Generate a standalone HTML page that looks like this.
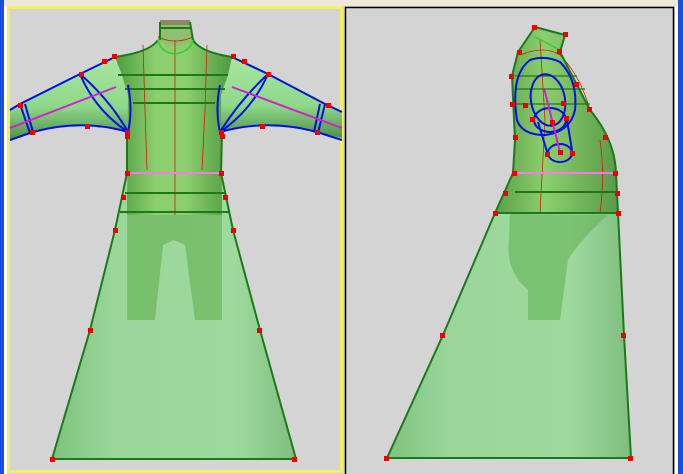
<!DOCTYPE html>
<html><head><style>
html,body{margin:0;padding:0;width:683px;height:474px;overflow:hidden;background:#d4d4d4}
svg{display:block}
</style></head><body>
<svg width="683" height="474" viewBox="0 0 683 474" xmlns="http://www.w3.org/2000/svg">
<defs>
<linearGradient id="dress" x1="0" x2="1" y1="0" y2="0">
<stop offset="0" stop-color="#6fbf6f"/><stop offset="0.25" stop-color="#8fd68f"/><stop offset="0.75" stop-color="#95da95"/><stop offset="1" stop-color="#6fba6f"/></linearGradient>
<linearGradient id="torso" x1="0" x2="1"><stop offset="0" stop-color="#4f9a40"/><stop offset="0.35" stop-color="#8ccf6e"/><stop offset="0.6" stop-color="#8ccf6e"/><stop offset="1" stop-color="#4f9a40"/></linearGradient>
<linearGradient id="arm" x1="0" x2="0" y1="0" y2="1"><stop offset="0" stop-color="#a8e6a0"/><stop offset="0.6" stop-color="#8fd88a"/><stop offset="1" stop-color="#4e8f48"/></linearGradient>
<linearGradient id="side" x1="0" x2="1"><stop offset="0" stop-color="#5a9e48"/><stop offset="0.4" stop-color="#8ccf6e"/><stop offset="1" stop-color="#5a9a48"/></linearGradient>
</defs>
<!-- frame -->
<rect x="0" y="0" width="683" height="6" fill="#ece9d8"/>
<rect x="0" y="0" width="4" height="474" fill="#1a4fd8"/>
<rect x="4" y="6" width="3" height="468" fill="#fff"/>
<rect x="678" y="0" width="5" height="474" fill="#1a4fd8"/>
<rect x="675" y="6" width="3" height="468" fill="#fff"/>
<rect x="8.5" y="7.5" width="333" height="464" fill="none" stroke="#f6f060" stroke-width="3"/>
<rect x="345.5" y="7.5" width="328" height="470" fill="none" stroke="#000" stroke-width="1.5"/>

<!-- LEFT FIGURE -->
<!-- arms -->
<path d="M115,57 L20,104 L10,110 L10,140 L30,133 Q80,118 128,132 L128,80 Z" fill="url(#arm)"/>
<path d="M232,57 L325,104 L342,112 L342,138 L320,133 Q270,118 220,132 L220,80 Z" fill="url(#arm)"/>
<!-- legs -->
<path d="M127,190 L222,190 L222,320 L195,320 L185,245 L174,240 L163,245 L155,320 L127,320 Z" fill="#6fb560"/>
<!-- dress -->
<path d="M127,173 L221,173 L233,230 L260,330 L296,459 L52,459 L90,330 L115,230 Z" fill="url(#dress)" fill-opacity="0.85"/>
<path d="M127,190 L222,190 L222,320 L195,320 L185,245 L174,240 L163,245 L155,320 L127,320 Z" fill="#6cb25c" fill-opacity="0.6"/>
<!-- torso -->
<path d="M158,40 Q150,52 115,57 L122,75 L128,95 L127,215 L222,215 L221,95 L228,75 L232,57 Q200,52 193,40 Z" fill="url(#torso)"/>
<path d="M160,22 L190,22 L193,40 Q175,52 158,40 Z" fill="#8fbf70"/>
<rect x="160" y="20" width="30" height="5" fill="#8a8a60"/>
<!-- red seams -->
<g stroke="#cc2200" stroke-width="0.8" fill="none">
<path d="M143,45 L145,110 L147,170"/><path d="M207,45 L205,110 L202,170"/>
<path d="M175,40 L175,215"/><path d="M158,37 Q175,45 193,37"/>
</g>
<!-- green lines -->
<g stroke="#1a7a1a" stroke-width="2" fill="none">
<path d="M158,40 Q150,52 115,57"/><path d="M193,40 Q200,52 232,57"/>
<path d="M160,22 L160,40 M190,22 L193,40 M160,28 L190,28"/>
<path d="M118,75 L228,75 M125,89 L225,89 M133,103 L215,103"/>
<path d="M125,193 L225,193 M120,212 L229,212"/>
<path d="M127,132 L127,173 M222,132 L221,173"/>
<path d="M127,173 L115,230 L90,330 L52,459 L296,459 L260,330 L233,230 L221,173"/>
</g>
<path d="M158,40 Q160,52 175,54 Q190,52 193,40" stroke="#2fcf2f" stroke-width="1.5" fill="none"/>
<!-- blue arm outlines -->
<g stroke="#0010e0" stroke-width="2" fill="none">
<path d="M115,57 L80,74 L20,104 L10,110"/><path d="M128,132 Q80,118 30,133 L10,140"/>
<path d="M80,74 Q95,110 128,132 M80,74 Q110,100 128,132"/>
<path d="M20,104 L30,133 M25,104 L33,132"/>
<path d="M232,57 L268,74 L325,104 L342,112"/><path d="M220,132 Q270,118 320,133 L342,140"/>
<path d="M268,74 Q252,110 220,132 M268,74 Q240,100 220,132"/>
<path d="M325,104 L318,133 M320,104 L314,132"/>
<path d="M128,85 Q133,110 128,132 M220,85 Q215,110 220,132"/>
</g>
<g stroke="#d020d0" stroke-width="2"><path d="M10,128 L116,87"/><path d="M232,87 L342,128"/></g>
<path d="M127,173 L221,173" stroke="#f080e0" stroke-width="2"/>
<!-- red markers left -->
<g fill="#ee0000">
<rect x="112" y="54" width="5" height="5"/><rect x="102" y="59" width="5" height="5"/><rect x="79" y="72" width="5" height="5"/>
<rect x="18" y="103" width="5" height="5"/><rect x="30" y="130" width="5" height="5"/><rect x="85" y="124" width="5" height="5"/>
<rect x="125" y="130" width="5" height="5"/><rect x="125" y="134" width="5" height="5"/>
<rect x="231" y="54" width="5" height="5"/><rect x="242" y="59" width="5" height="5"/><rect x="266" y="72" width="5" height="5"/>
<rect x="326" y="103" width="5" height="5"/><rect x="315" y="130" width="5" height="5"/><rect x="260" y="124" width="5" height="5"/>
<rect x="219" y="130" width="5" height="5"/><rect x="220" y="134" width="5" height="5"/>
<rect x="125" y="171" width="5" height="5"/><rect x="219" y="171" width="5" height="5"/>
<rect x="121" y="195" width="5" height="5"/><rect x="223" y="195" width="5" height="5"/>
<rect x="113" y="228" width="5" height="5"/><rect x="231" y="228" width="5" height="5"/>
<rect x="88" y="328" width="5" height="5"/><rect x="257" y="328" width="5" height="5"/>
<rect x="50" y="457" width="5" height="5"/><rect x="292" y="457" width="5" height="5"/>
</g>

<!-- RIGHT FIGURE -->
<path d="M510,214 L509,240 Q505,270 528,290 L528,320 L560,320 L568,260 Q580,240 608,215 Z" fill="#6fb560"/>
<path d="M513,173 L616,173 L618,213 L624,335 L631,458 L387,458 L443,335 L495,213 Z" fill="url(#dress)" fill-opacity="0.85"/>
<path d="M510,214 L509,240 Q505,270 528,290 L528,320 L560,320 L568,260 Q580,240 608,215 Z" fill="#6cb25c" fill-opacity="0.55"/>
<path d="M535,27 L565,35 L560,52 L577,85 L590,110 Q615,140 616,173 L618,213 L495,213 L513,173 L515,140 L512,76 L518,52 Z" fill="url(#side)"/>
<g stroke="#cc2200" stroke-width="0.8" fill="none">
<path d="M520,55 Q545,45 560,55 Q580,75 590,110"/><path d="M540,40 L545,120 L540,213"/>
<path d="M600,140 Q605,175 600,213"/>
</g>
<g stroke="#1a7a1a" stroke-width="2" fill="none">
<path d="M535,27 L565,35 M535,27 L518,52 L512,76 L515,140 L513,173 L495,213 L443,335 L387,458 L631,458 L624,335 L618,213 L616,173 Q615,140 590,110 L577,85 L560,52 L565,35"/>
<path d="M515,192 L616,192 M495,213 L618,213"/>
<path d="M515,76 L577,76 M515,89 L585,89 M515,104 L590,104" stroke-width="1.2"/>
</g>
<path d="M535,37 L560,50" stroke="#2fcf2f" stroke-width="1.5"/>
<path d="M513,173 L616,173" stroke="#f080e0" stroke-width="2"/>
<g stroke="#0010e0" stroke-width="2" fill="none">
<path d="M530,60 Q510,75 517,120 Q522,135 545,135 Q570,132 575,110 Q578,80 560,62 Q545,55 530,60 Z"/>
<ellipse cx="548" cy="100" rx="17" ry="26" transform="rotate(-10 548 100)"/>
<ellipse cx="550" cy="120" rx="16" ry="12"/>
<ellipse cx="560" cy="153" rx="12" ry="9"/>
<path d="M538,122 L548,155 M567,120 L572,150"/>
</g>
<path d="M544,88 L560,152" stroke="#d020d0" stroke-width="2"/>
<g fill="#ee0000">
<rect x="532" y="25" width="5" height="5"/><rect x="563" y="32" width="5" height="5"/><rect x="517" y="50" width="5" height="5"/><rect x="557" y="49" width="5" height="5"/>
<rect x="509" y="74" width="5" height="5"/><rect x="574" y="82" width="5" height="5"/><rect x="510" y="102" width="5" height="5"/><rect x="523" y="103" width="5" height="5"/>
<rect x="561" y="101" width="5" height="5"/><rect x="587" y="107" width="5" height="5"/><rect x="530" y="117" width="5" height="5"/><rect x="550" y="120" width="5" height="5"/>
<rect x="564" y="116" width="5" height="5"/><rect x="513" y="135" width="5" height="5"/><rect x="603" y="135" width="5" height="5"/>
<rect x="545" y="152" width="5" height="5"/><rect x="558" y="150" width="5" height="5"/><rect x="570" y="151" width="5" height="5"/>
<rect x="512" y="171" width="5" height="5"/><rect x="613" y="171" width="5" height="5"/>
<rect x="503" y="191" width="5" height="5"/><rect x="615" y="191" width="5" height="5"/>
<rect x="493" y="211" width="5" height="5"/><rect x="616" y="211" width="5" height="5"/>
<rect x="440" y="333" width="5" height="5"/><rect x="621" y="333" width="5" height="5"/>
<rect x="384" y="456" width="5" height="5"/><rect x="628" y="456" width="5" height="5"/>
</g>
</svg>
</body></html>
